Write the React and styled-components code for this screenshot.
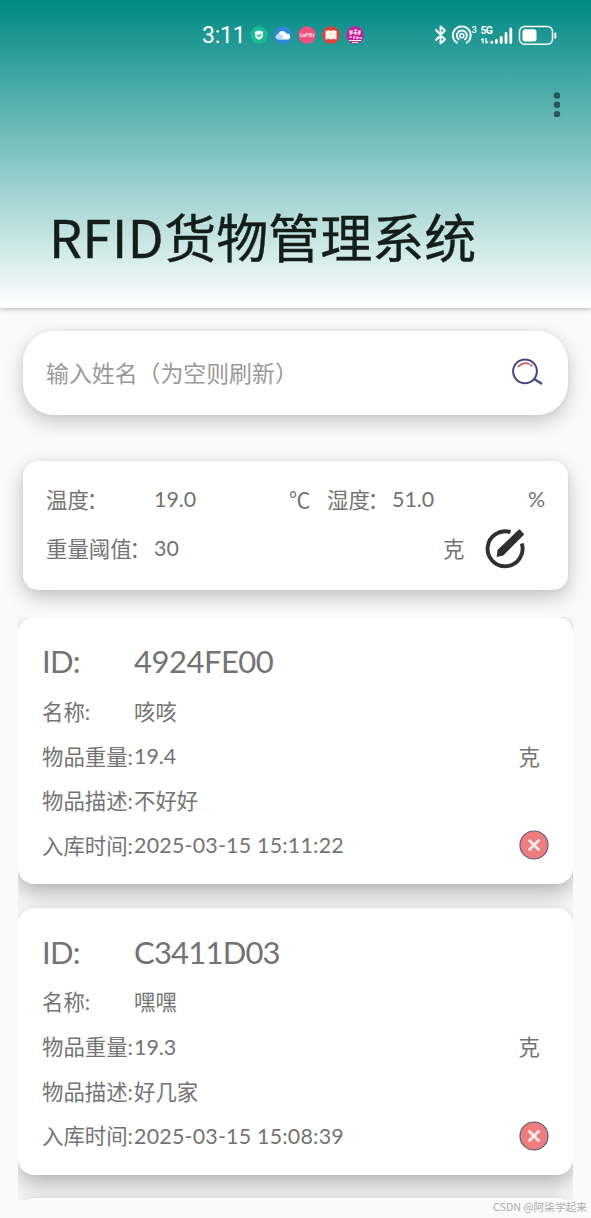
import React from "react";
import styled, { createGlobalStyle } from "styled-components";

const Global = createGlobalStyle`
  *{box-sizing:border-box}
  html,body{margin:0;padding:0;background:#fafafa}
  body{font-family:Lato,"Noto Sans CJK SC",sans-serif;color:#737373;overflow:hidden}
  svg{display:block;flex:none}
`;

const Screen = styled.main`
  width: 591px;
  height: 1218px;
  display: flex;
  flex-direction: column;
  overflow: hidden;
  background: #fafafa;
`;
const Header = styled.header`
  height: 308px;
  flex: none;
  display: flex;
  flex-direction: column;
  background: linear-gradient(#008984, #fff);
  box-shadow: 0 1px 5px rgba(0, 0, 0, 0.28);
`;
const StatusBar = styled.div`
  height: 70px;
  display: flex;
  align-items: center;
  padding: 0 32px 0 202px;
  color: #fff;
`;
const Clock = styled.span`
  width: 48px;
  font: 400 23px/30px Roboto, sans-serif;
  letter-spacing: -0.2px;
  padding-top: 1px;
`;
const AppIcons = styled.div`
  display: flex;
  gap: 6px;
  flex: 1;
`;
const MenuButton = styled.button`
  align-self: flex-end;
  margin-right: 24px;
  width: 20px;
  height: 70px;
  padding: 0 6px;
  border: 0;
  background: none;
`;
const Title = styled.h1`
  margin: 56px 0 0 49px;
  font-size: 52px;
  font-weight: 400;
  line-height: 80px;
  color: #151c1c;
  white-space: nowrap;
  -webkit-text-stroke: 0.4px #151c1c;
`;
const TitleLatin = styled.span`
  letter-spacing: 0.6px;
  font-family: "Noto Sans CJK SC", sans-serif;
`;
const SearchBox = styled.section`
  margin: 23px 23px 0;
  height: 84px;
  flex: none;
  display: flex;
  align-items: center;
  justify-content: space-between;
  padding: 0 25px 2px 23px;
  border-radius: 31px;
  background: #fff;
  box-shadow: 0 7px 20px rgba(0, 0, 0, 0.21), 0 0 4px rgba(0, 0, 0, 0.05);
  font-size: 22.9px;
  color: #999;
`;
const Panel = styled.section`
  margin: 46px 23px 0;
  height: 129px;
  flex: none;
  padding: 14px 22px 0 23px;
  border-radius: 15px;
  background: #fff;
  box-shadow: 0 7px 20px rgba(0, 0, 0, 0.23), 0 0 4px rgba(0, 0, 0, 0.05);
  font-size: 21.4px;
`;
const PanelRow = styled.div`
  height: 49px;
  display: flex;
  align-items: center;
  white-space: nowrap;
`;
const Cell = styled.span`
  width: ${(p) => p.$w}px;
  flex: none;
  padding-bottom: 2px;
`;
const Colon = styled.span`
  margin-left: -2px;
`;
const List = styled.section`
  margin: 27px 18px 0;
  height: 583px;
  flex: none;
  display: flex;
  flex-direction: column;
  gap: 23.5px;
  overflow: hidden;
`;
const ItemCard = styled.article`
  height: 267px;
  flex: none;
  padding: 20px 24px 0 24px;
  border-radius: 16px;
  background: #fff;
  box-shadow: 0 10px 22px rgba(0, 0, 0, 0.28), 0 0 6px rgba(0, 0, 0, 0.05);
`;
const ItemRow = styled.div`
  height: ${(p) => (p.$large ? 52 : 44.7)}px;
  display: flex;
  align-items: center;
  font-size: ${(p) => (p.$large ? 31 : 21.4)}px;
  white-space: nowrap;
`;
const Label = styled.span`
  width: 92px;
  flex: none;
  padding-bottom: ${(p) => (p.$large ? 4 : 2)}px;
  letter-spacing: ${(p) => (p.$large ? -0.8 : 0)}px;
`;
const Value = styled.span`
  flex: 1;
  padding-bottom: ${(p) => p.$lift ?? 2}px;
  letter-spacing: ${(p) => p.$spacing || 0}px;
`;
const Unit = styled.span`
  margin-right: 9px;
  padding-bottom: 2px;
`;
const Watermark = styled.footer`
  padding-right: 4px;
  text-align: right;
  font-family: "Noto Sans CJK SC", sans-serif;
  font-size: 10.7px;
  line-height: 14px;
  color: #adadad;
`;

const Badge = ({ color, children }) => (
  <svg width="18" height="18" viewBox="0 0 18 18">
    <circle cx="9" cy="9" r="8.7" fill={color} />
    {children}
  </svg>
);

const StatusIcons = () => (
  <svg width="125" height="24" viewBox="0 0 125 24" fill="none" stroke="#fff">
    <path d="M2 7l9 9.5-4.5 4V3.5l4.500 4L2 17" strokeWidth="1.9" strokeLinejoin="round" strokeLinecap="round" />
    <g strokeWidth="1.900" strokeLinecap="round">
      <path d="M23 19.800a8.900 8.900 0 1 1 9.600 0" />
      <path d="M24.800 16.500a5 5 0 1 1 6 0" />
    </g>
    <circle cx="27.800" cy="12.800" r="2" strokeWidth="1.500" />
    <g fill="#fff" stroke="none" fontFamily="Roboto,sans-serif">
      <text x="37.500" y="9.500" fontSize="9.500" fontWeight="500">3</text>
      <text x="46.500" y="11" fontSize="10.500" fontWeight="700" textLength="12.500">5G</text>
    </g>
    <path d="M49 15v5.500M52 15v5.500M47 17.200l2-1.700M54 18.500l-2 1.700" strokeWidth="1.300" />
    <g strokeWidth="2.800" strokeLinecap="round">
      <path d="M57.800 19.200v.4M62.400 17.500v2.100M67.200 14.500v5.100M72 10.500v9.100M76.800 6v13.600" />
    </g>
    <rect x="85.500" y="3.500" width="33" height="17.700" rx="5" strokeWidth="1.500" />
    <rect x="88.500" y="6.300" width="14" height="12.200" rx="2.500" fill="#fff" stroke="none" />
    <path d="M121.300 10.500v4" strokeWidth="2" strokeLinecap="round" />
  </svg>
);

const SearchIcon = () => (
  <svg width="32" height="28" viewBox="0 0 32 28" fill="none" strokeLinecap="round">
    <circle cx="14" cy="13.300" r="11.900" stroke="#454780" strokeWidth="2" />
    <path d="M24 21.500l6.300 4" stroke="#454780" strokeWidth="2.200" />
    <path d="M7.500 8.500c3-3.500 7.500-4.200 10.500-2.500M20 7.200l.8.500" stroke="#c95761" strokeWidth="1.700" />
  </svg>
);

const EditIcon = () => (
  <svg width="40" height="40" viewBox="0 0 40 40">
    <path d="M25.500 3.100A17.500 17.500 0 1 0 36.800 14.500" fill="none" stroke="#303030" strokeWidth="3.900" />
    <path d="M12.500 21L33.500.8Q34.300 0 35 .8L38.600 4.500Q39.400 5.300 38.600 6L18.300 26.500L11.700 28Z" fill="#303030" />
  </svg>
);

const DeleteIcon = () => (
  <svg width="30" height="30" viewBox="0 0 30 30">
    <circle cx="15" cy="15" r="14" fill="#ee7e7e" stroke="#66577f" strokeWidth="1.200" />
    <path d="M10.500 10.500l9 9m0-9l-9 9" stroke="#ffeceb" strokeWidth="2.700" strokeLinecap="round" />
  </svg>
);

const items = [
  { id: "4924FE00", spacing: -0.5, name: "咳咳", weight: "19.4", note: "不好好", time: "2025-03-15 15:11:22" },
  { id: "C3411D03", spacing: -0.8, name: "嘿嘿", weight: "19.3", note: "好几家", time: "2025-03-15 15:08:39" },
];

const Item = ({ item }) => (
  <ItemCard>
    <ItemRow $large><Label $large>ID:</Label><Value $lift={4} $spacing={item.spacing}>{item.id}</Value></ItemRow>
    <ItemRow><Label>名称:</Label><Value>{item.name}</Value></ItemRow>
    <ItemRow><Label>物品重量:</Label><Value $lift={0}>{item.weight}</Value><Unit>克</Unit></ItemRow>
    <ItemRow><Label>物品描述:</Label><Value>{item.note}</Value></ItemRow>
    <ItemRow><Label>入库时间:</Label><Value $lift={0} $spacing={0.22}>{item.time}</Value><DeleteIcon /></ItemRow>
  </ItemCard>
);

export default function App() {
  return (
    <Screen>
      <Global />
      <Header>
        <StatusBar>
          <Clock>3:11</Clock>
          <AppIcons>
            <Badge color="#18bd93">
              <path d="M9 4.500l4 1.300v3.500c0 2-1.700 3.500-4 4.500-2.300-1-4-2.500-4-4.500V5.800z" fill="#fff" />
              <path d="M7 9l1.500 1.500L11.200 8" fill="none" stroke="#18bd93" strokeWidth="1.300" />
            </Badge>
            <Badge color="#3486e5">
              <path d="M4.500 13.500a2.800 2.800 0 0 1 0-5.500 4 4 0 0 1 7.700-.3 3 3 0 0 1 1.800 5.800z" fill="#fff" />
              <path d="M3.500 13.300a2.600 2.600 0 0 1 1.500-5 3.500 3.500 0 0 1 4 5z" fill="#bcdcff" />
            </Badge>
            <Badge color="#f04f7f">
              <text x="2" y="11" fontSize="5" fontWeight="700" fill="#fff" fontFamily="Lato">LoFtEr</text>
            </Badge>
            <Badge color="#df403c">
              <path d="M3.500 5q3-1.500 5.500 0 2.500-1.500 5.500 0v8.500q-3-1-5.500 0-2.500-1-5.500 0z" fill="#fff2e7" />
            </Badge>
            <Badge color="#c91f9b">
              <path d="M3 5h4M8 4h3M12 5h3M3 7h12M5 5v4M9.500 4v5M13 5v4M3 11h3M8 10v3M11 10v3M12 12h4M3 14.500h12M6 16.500h6" stroke="#fff" strokeWidth="1.200" />
            </Badge>
          </AppIcons>
          <StatusIcons />
        </StatusBar>
        <MenuButton aria-label="菜单">
          <svg width="8" height="26" viewBox="0 0 8 26" fill="#28565a">
            <circle cx="4" cy="3.500" r="3.200" /><circle cx="4" cy="12.800" r="3.200" /><circle cx="4" cy="22.100" r="3.200" />
          </svg>
        </MenuButton>
        <Title><TitleLatin>RFID</TitleLatin>货物管理系统</Title>
      </Header>
      <SearchBox><span>输入姓名（为空则刷新）</span><SearchIcon /></SearchBox>
      <Panel>
        <PanelRow>
          <Cell $w={108}>温度<Colon>：</Colon></Cell><Cell $w={135}>19.0</Cell><Cell $w={38}>℃</Cell>
          <Cell $w={65}>湿度<Colon>：</Colon></Cell><Cell $w={136}>51.0</Cell><Cell $w={20}>%</Cell>
        </PanelRow>
        <PanelRow>
          <Cell $w={108}>重量阈值<Colon>：</Colon></Cell><Cell $w={289}>30</Cell><Cell $w={42}>克</Cell><EditIcon />
        </PanelRow>
      </Panel>
      <List>{items.map((item) => <Item key={item.id} item={item} />)}<ItemCard /></List>
      <Watermark>CSDN @阿柒学起来</Watermark>
    </Screen>
  );
}
